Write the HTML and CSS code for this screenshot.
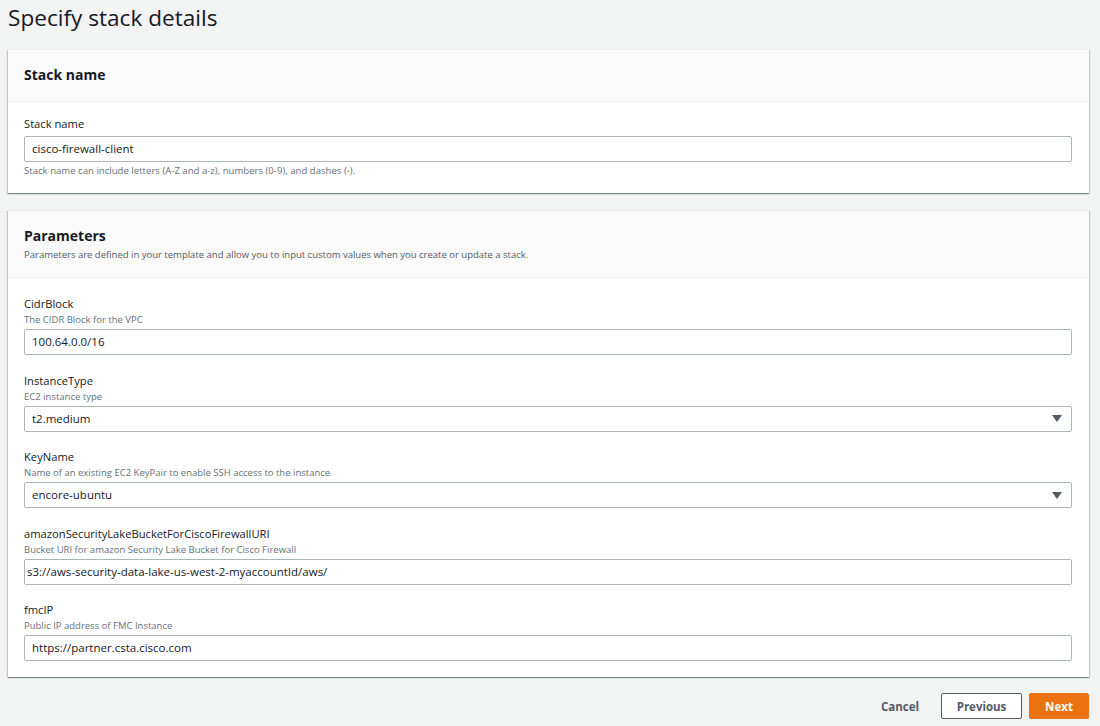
FILE: index.html
```html
<!DOCTYPE html>
<html>
<head>
<meta charset="utf-8">
<link rel="stylesheet" href="styles.css">
</head>
<body>
<div class="page">
  <h1 class="title">Specify stack details</h1>

  <section class="card">
    <div class="card-header">
      <h2 class="card-title">Stack name</h2>
    </div>
    <div class="card-body body-stack">
      <div class="field">
        <label class="label">Stack name</label>
        <div class="input input-tight">cisco-firewall-client</div>
        <div class="hint">Stack name can include letters (A-Z and a-z), numbers (0-9), and dashes (-).</div>
      </div>
    </div>
  </section>

  <section class="card card-params">
    <div class="card-header header-params">
      <h2 class="card-title">Parameters</h2>
      <div class="card-desc">Parameters are defined in your template and allow you to input custom values when you create or update a stack.</div>
    </div>
    <div class="card-body body-params">
      <div class="field">
        <label class="label">CidrBlock</label>
        <div class="desc">The CIDR Block for the VPC</div>
        <div class="input">100.64.0.0/16</div>
      </div>
      <div class="field">
        <label class="label">InstanceType</label>
        <div class="desc">EC2 instance type</div>
        <div class="input select">t2.medium<svg class="caret" width="10" height="7" viewBox="0 0 10 7"><path d="M0 0h10L5 7z" fill="#545b64"/></svg></div>
      </div>
      <div class="field">
        <label class="label">KeyName</label>
        <div class="desc">Name of an existing EC2 KeyPair to enable SSH access to the instance</div>
        <div class="input select">encore-ubuntu<svg class="caret" width="10" height="7" viewBox="0 0 10 7"><path d="M0 0h10L5 7z" fill="#545b64"/></svg></div>
      </div>
      <div class="field">
        <label class="label">amazonSecurityLakeBucketForCiscoFirewallURI</label>
        <div class="desc">Bucket URI for amazon Security Lake Bucket for Cisco Firewall</div>
        <div class="input input-s3">s3://aws-security-data-lake-us-west-2-myaccountId/aws/</div>
      </div>
      <div class="field">
        <label class="label">fmcIP</label>
        <div class="desc">Public IP address of FMC Instance</div>
        <div class="input">https://partner.csta.cisco.com</div>
      </div>
    </div>
  </section>

  <div class="actions">
    <button class="btn btn-link">Cancel</button>
    <button class="btn btn-normal">Previous</button>
    <button class="btn btn-primary">Next</button>
  </div>
</div>
</body>
</html>
```
FILE: styles.css
```css
* { box-sizing: border-box; }
html, body {
  margin: 0;
  padding: 0;
  background: #f2f3f3;
}
body {
  font-family: "Open Sans", "Noto Sans", sans-serif;
  color: #16191f;
}
.page {
  padding: 0 11px 0 8px;
  width: 1100px;
}
.title {
  margin: 0;
  padding-top: 1px;
  font-size: 22.6px;
  line-height: 34px;
  font-weight: 400;
  color: #16191f;
}
.card {
  margin-top: 14px;
  background: #fff;
  box-shadow: 0 1px 1px 0 rgba(0, 28, 36, 0.3), 1px 1px 1px 0 rgba(0, 28, 36, 0.15), -1px 1px 1px 0 rgba(0, 28, 36, 0.15);
  border-top: 1px solid #eaeded;
}
.card-params { margin-top: 17px; }
.card-header {
  background: #fafafa;
  border-bottom: 1px solid #eaeded;
  padding: 13px 16px 14px;
  height: 52px;
}
.header-params {
  padding-top: 14px;
  height: 67px;
}
.card-title {
  margin: 0;
  font-size: 14px;
  line-height: 24px;
  font-weight: 700;
}
.header-params .card-title { line-height: 22px; }
.card-desc {
  font-size: 9.5px;
  line-height: 16px;
  color: #545b64;
}
.card-body { padding: 13px 16px 15px; }
.body-params { padding-top: 17px; padding-bottom: 16px; }
.field + .field { margin-top: 16.5px; }
.label {
  display: block;
  font-size: 11.2px;
  line-height: 18px;
}
.desc {
  font-size: 9.5px;
  line-height: 14px;
  color: #687078;
}
.input {
  margin-top: 2px;
  height: 26px;
  width: 1048px;
  border: 1px solid #aab7b8;
  border-radius: 2px;
  padding: 0 7px;
  font-size: 11.5px;
  line-height: 24px;
  display: flex;
  align-items: center;
}
.input-tight { margin-top: 3px; }
.input-s3 { padding-left: 2px; }
.select { justify-content: space-between; padding-right: 9px; }
.caret { display: block; }
.hint {
  margin-top: 2px;
  font-size: 9.6px;
  line-height: 14px;
  color: #687078;
}
.actions {
  display: flex;
  justify-content: flex-end;
  align-items: center;
  margin-top: 16px;
}
.btn {
  font-family: inherit;
  font-size: 11.5px;
  font-weight: 700;
  height: 26px;
  border-radius: 2px;
  cursor: pointer;
  padding: 0;
}
.btn-link {
  background: none;
  border: none;
  color: #545b64;
  padding: 0 12px;
  margin-right: 10px;
}
.btn-normal {
  background: #fff;
  border: 1px solid #545b64;
  color: #545b64;
  width: 81px;
}
.btn-primary {
  background: #ec7211;
  border: 1px solid #ec7211;
  color: #fff;
  width: 60px;
  margin-left: 7px;
}
```
